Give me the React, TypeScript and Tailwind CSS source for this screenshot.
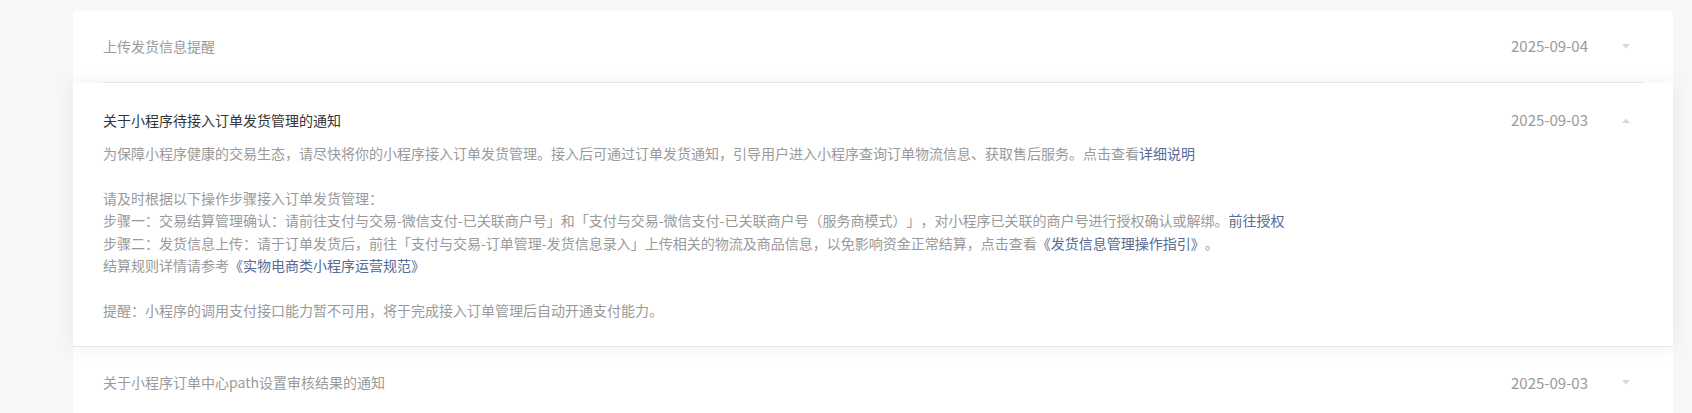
import React from 'react';

const font = { fontFamily: '"Noto Sans CJK SC", "Noto Sans", sans-serif' };

function Caret({ up }: { up?: boolean }) {
  return (
    <div className="w-[35px] ml-[20px] flex items-center justify-center">
      <svg width="8" height="5" viewBox="0 0 8 5" className={up ? 'rotate-180' : ''}>
        <polygon points="0,0 8,0 4,4.5" fill="#d8d8dc" />
      </svg>
    </div>
  );
}

function Row({ title, date }: { title: string; date: string }) {
  return (
    <div className="px-[30px]">
      <div className="h-[72px] flex items-center border-b border-[#ececf0]">
        <div className="flex-1 text-[14px] text-[#9a9a9a]">{title}</div>
        <div className="text-[15px] text-[#9a9a9a]">{date}</div>
        <Caret />
      </div>
    </div>
  );
}

const Link = ({ children }: { children: React.ReactNode }) => (
  <a className="text-[#576b95] cursor-pointer">{children}</a>
);

export default function App() {
  return (
    <main className="min-h-screen bg-[#f6f7f9] pl-[73px] pr-[19px] pt-[11px] [text-spacing-trim:space-all]" style={font}>
      <div className="bg-white rounded-[4px]">
        <Row title="上传发货信息提醒" date="2025-09-04" />

        {/* 展开的通知 */}
        <div className="relative z-10 bg-white px-[30px] pt-[26px] pb-[25px] shadow-[0_0_18px_rgba(0,0,0,0.07)] border-b border-[#e7e7eb]">
          <div className="flex items-center leading-[22px]">
            <div className="flex-1 text-[14px] text-[#353535]">关于小程序待接入订单发货管理的通知</div>
            <div className="text-[15px] text-[#9a9a9a]">2025-09-03</div>
            <Caret up />
          </div>
          <div className="mt-[11px] text-[14px] leading-[22.4px] text-[#9a9a9a]">
            <p>
              为保障小程序健康的交易生态，请尽快将你的小程序接入订单发货管理。接入后可通过订单发货通知，引导用户进入小程序查询订单物流信息、获取售后服务。点击查看<Link>详细说明</Link>
            </p>
            <p>&nbsp;</p>
            <p>请及时根据以下操作步骤接入订单发货管理：</p>
            <p>
              步骤一：交易结算管理确认：请前往支付与交易-微信支付-已关联商户号」和「支付与交易-微信支付-已关联商户号（服务商模式）」，对小程序已关联的商户号进行授权确认或解绑。<Link>前往授权</Link>
            </p>
            <p>
              步骤二：发货信息上传：请于订单发货后，前往「支付与交易-订单管理-发货信息录入」上传相关的物流及商品信息，以免影响资金正常结算，点击查看<Link>《发货信息管理操作指引》</Link>。
            </p>
            <p>
              结算规则详情请参考<Link>《实物电商类小程序运营规范》</Link>
            </p>
            <p>&nbsp;</p>
            <p>提醒：小程序的调用支付接口能力暂不可用，将于完成接入订单管理后自动开通支付能力。</p>
          </div>
        </div>

        <Row title="关于小程序订单中心path设置审核结果的通知" date="2025-09-03" />
      </div>
    </main>
  );
}
